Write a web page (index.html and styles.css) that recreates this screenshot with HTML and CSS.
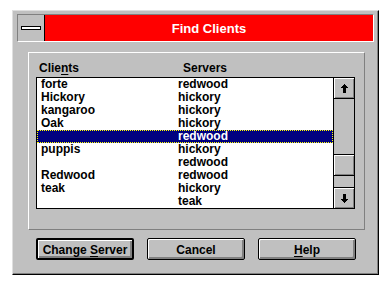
FILE: index.html
```html
<!DOCTYPE html>
<html>
<head>
<meta charset="utf-8">
<link rel="stylesheet" href="styles.css">
</head>
<body>
<div class="window">
  <div class="titlebar">
    <div class="sysmenu"><span class="sysbar"></span></div>
    <div class="title">Find Clients</div>
  </div>
  <div class="group">
    <div class="headers">
      <span>Clie<u>n</u>ts</span>
      <span>Servers</span>
    </div>
    <div class="listbox">
      <div class="rows">
        <div class="row"><span>forte</span><span>redwood</span></div>
        <div class="row"><span>Hickory</span><span>hickory</span></div>
        <div class="row"><span>kangaroo</span><span>hickory</span></div>
        <div class="row"><span>Oak</span><span>hickory</span></div>
        <div class="row selected"><span></span><span>redwood</span></div>
        <div class="row"><span>puppis</span><span>hickory</span></div>
        <div class="row"><span></span><span>redwood</span></div>
        <div class="row"><span>Redwood</span><span>redwood</span></div>
        <div class="row"><span>teak</span><span>hickory</span></div>
        <div class="row"><span></span><span>teak</span></div>
      </div>
      <div class="scrollbar">
        <div class="sbtn up">
          <svg width="7" height="9" viewBox="0 0 7 9" shape-rendering="crispEdges"><rect x="3" y="0" width="1" height="1"/><rect x="2" y="1" width="3" height="1"/><rect x="1" y="2" width="5" height="1"/><rect x="0" y="3" width="7" height="1"/><rect x="2" y="4" width="3" height="5"/></svg>
        </div>
        <div class="track track-top"></div>
        <div class="thumb"></div>
        <div class="track track-bottom"></div>
        <div class="sbtn down">
          <svg width="7" height="9" viewBox="0 0 7 9" shape-rendering="crispEdges"><rect x="2" y="0" width="3" height="5"/><rect x="0" y="5" width="7" height="1"/><rect x="1" y="6" width="5" height="1"/><rect x="2" y="7" width="3" height="1"/><rect x="3" y="8" width="1" height="1"/></svg>
        </div>
      </div>
    </div>
  </div>
  <div class="buttons">
    <div class="btn default"><span>Change <u>S</u>erver</span></div>
    <div class="btn"><span>Cancel</span></div>
    <div class="btn"><span><u>H</u>elp</span></div>
  </div>
</div>
</body>
</html>
```
FILE: styles.css
```css
html, body {
  margin: 0;
  padding: 0;
  background: #ffffff;
}
body {
  font-family: "Liberation Sans", Arial, sans-serif;
  font-weight: bold;
  font-size: 12px;
  color: #000;
}
.window {
  margin: 10px 0 0 12px;
  width: 367px;
  height: 265px;
  box-sizing: border-box;
  background: #c0c0c0;
  border: 1px solid;
  border-color: #dfdfdf #000 #000 #dfdfdf;
  box-shadow: inset -1px -1px 0 #808080;
  padding: 3px 4px 0 4px;
}
.titlebar {
  display: flex;
  height: 28px;
  box-sizing: border-box;
  border-top: 1px solid #808080;
  border-left: 1px solid #808080;
  border-right: 1px solid #fff;
  border-bottom: 1px solid #fff;
}
.sysmenu {
  width: 26px;
  border-right: 1px solid #000;
  background: #c0c0c0;
  display: flex;
  align-items: center;
  justify-content: center;
}
.sysbar {
  width: 18px;
  height: 2px;
  background: #fff;
  border: 1px solid #000;
  margin-top: -1px;
}
.title {
  flex: 1;
  background: #ff0000;
  color: #fff;
  font-size: 13px;
  display: flex;
  align-items: center;
  justify-content: center;
  padding-top: 1px;
}
.group {
  margin: 10px 9px 0 11px;
  height: 178px;
  box-sizing: border-box;
  border-top: 1px solid #fff;
  border-left: 1px solid #fff;
  border-right: 1px solid #808080;
  border-bottom: 1px solid #808080;
  padding: 9px 7px 0 7px;
}
.headers {
  display: grid;
  grid-template-columns: 144px 1fr;
  height: 13px;
  line-height: 13px;
  padding-left: 3px;
  margin-bottom: 2px;
}
.listbox {
  display: flex;
  width: 319px;
  height: 132px;
  box-sizing: border-box;
  border: 1px solid #000;
}
.rows {
  flex: 1;
  background: #fff;
}
.row {
  display: grid;
  grid-template-columns: 137px 1fr;
  height: 13px;
  line-height: 13px;
  padding-left: 4px;
  box-sizing: border-box;
}
.row.selected {
  background: #000080;
  color: #fff;
  outline: 1px dotted #ffff00;
  outline-offset: -1px;
}
.scrollbar {
  width: 20px;
  border-left: 1px solid #000;
  display: flex;
  flex-direction: column;
  background: #c0c0c0;
}
.sbtn {
  height: 20px;
  display: flex;
  align-items: center;
  justify-content: center;
  box-shadow: inset 1px 1px 0 #fff, inset -1px -1px 0 #808080;
}
.sbtn.up {
  border-bottom: 1px solid #000;
}
.sbtn.down {
  border-top: 1px solid #000;
}
.track-top {
  height: 55px;
}
.thumb {
  height: 20px;
  border-top: 1px solid #000;
  border-bottom: 1px solid #000;
  box-shadow: inset 1px 1px 0 #fff, inset -1px -1px 0 #808080;
}
.track-bottom {
  height: 11px;
}
.buttons {
  display: flex;
  gap: 13px;
  margin: 8px 0 0 19px;
}
.btn {
  width: 98px;
  height: 22px;
  box-sizing: border-box;
  border: 1px solid #000;
  border-radius: 2px;
  box-shadow: inset 1px 1px 0 #fff, inset -2px -2px 0 #808080;
  display: flex;
  align-items: center;
  justify-content: center;
  padding-top: 1px;
}
.btn.default {
  border-width: 2px;
}
u {
  text-decoration: underline;
  text-underline-offset: 2px;
}
```
